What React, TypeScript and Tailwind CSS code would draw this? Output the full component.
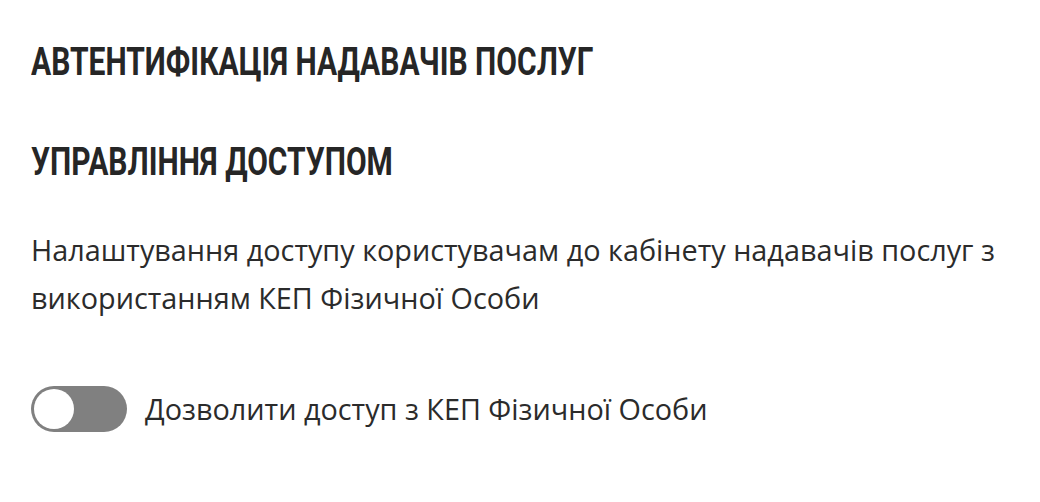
export default function App() {
  return (
    <div className="min-h-[502px] w-full bg-white px-[31px] pt-[38px] text-[#262626]" style={{ fontFamily: '"Open Sans", "Noto Sans", sans-serif' }}>
      <h2 className="h-[48px] font-['Roboto',sans-serif] text-[39px] font-bold leading-[48px]">
        <span className="inline-block origin-left scale-x-[0.77] whitespace-nowrap">АВТЕНТИФІКАЦІЯ НАДАВАЧІВ ПОСЛУГ</span>
      </h2>
      <h3 className="mt-[52px] h-[48px] font-['Roboto',sans-serif] text-[39px] font-bold leading-[48px]">
        <span className="inline-block origin-left scale-x-[0.77] whitespace-nowrap">УПРАВЛІННЯ ДОСТУПОМ</span>
      </h3>
      <p className="mt-[40px] text-[28.8px] leading-[48px] text-[#2b2b2b]">
        Налаштування доступу користувачам до кабінету надавачів послуг з використанням КЕП Фізичної Особи
      </p>
      <label className="mt-[64px] flex items-center gap-[18px]">
        <span className="relative flex h-[46px] w-[96px] items-center rounded-full bg-[#808080] px-[3px]">
          <span className="h-[40px] w-[40px] rounded-full bg-white" />
        </span>
        <span className="text-[28.8px] text-[#2b2b2b]">Дозволити доступ з КЕП Фізичної Особи</span>
      </label>
    </div>
  )
}
